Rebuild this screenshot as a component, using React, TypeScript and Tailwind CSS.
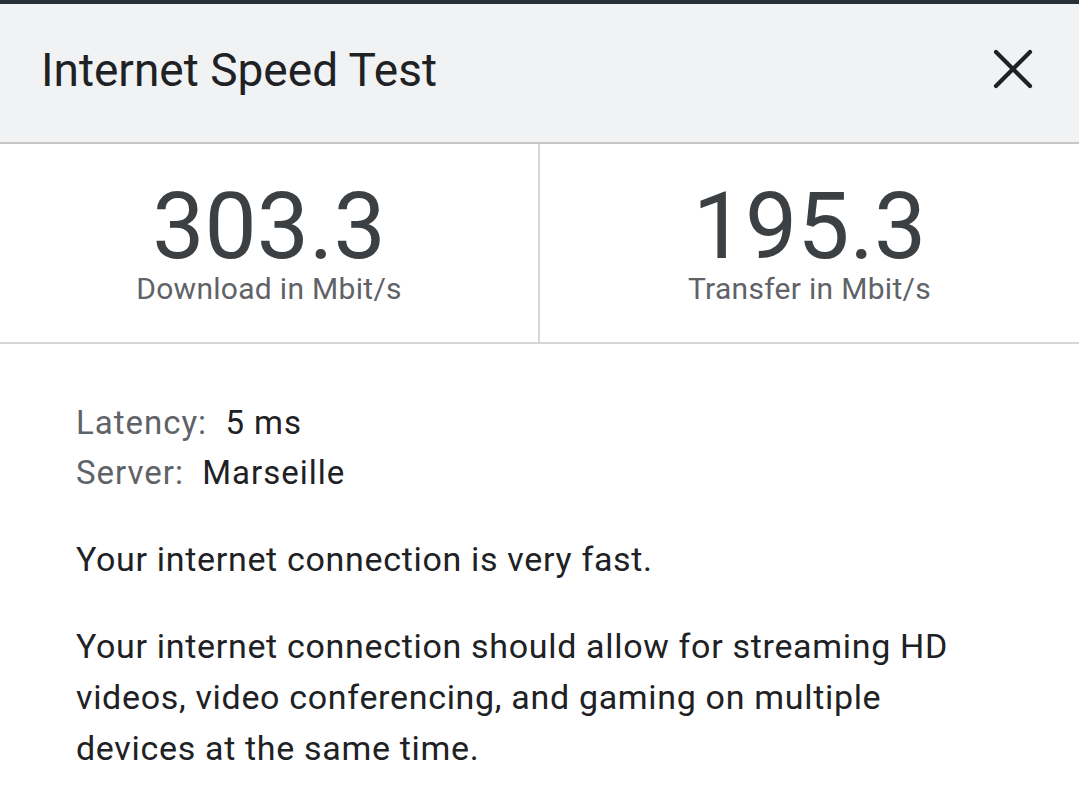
const stats = [
  { value: "303.3", label: "Download in Mbit/s" },
  { value: "195.3", label: "Transfer in Mbit/s" },
];

export default function App() {
  return (
    <div className="w-[1079px] h-[804px] overflow-hidden bg-white font-['Roboto',sans-serif]">
      {/* top strip */}
      <div className="h-[4px] bg-[#283036]" />

      {/* Header */}
      <div className="h-[140px] bg-[#f1f2f4] flex items-center justify-between pl-[41px] pr-[46px] border-b-2 border-[#c6c6c6]">
        <h1 className="text-[46px] text-[#202124] leading-none -mt-[6px]">Internet Speed Test</h1>
        <svg width="40" height="40" viewBox="0 0 40 40" className="-mt-[8px]">
          <path d="M3 3 L37 37 M37 3 L3 37" stroke="#202124" strokeWidth="4.2" strokeLinecap="round" fill="none" />
        </svg>
      </div>

      {/* Stats */}
      <div className="grid grid-cols-[540px_1fr] h-[200px] border-b-2 border-[#d6d6d6]">
        {stats.map((s, i) => (
          <div
            key={s.label}
            className={`flex flex-col items-center pt-[38px] ${i === 0 ? "border-r-2 border-[#d6d6d6]" : ""}`}
          >
            <span className="text-[93px] leading-[90px] text-[#3c4043]">{s.value}</span>
            <span className="text-[30px] leading-[34px] tracking-[0.01em] text-[#5f6368]">{s.label}</span>
          </div>
        ))}
      </div>

      {/* Details */}
      <div className="pl-[76px] pr-[80px] pt-[54px] text-[33px] leading-[50px] tracking-[0.03em] text-[#202124]">
        <div>
          <span className="text-[#5f6368]">Latency:</span>&nbsp; 5 ms
        </div>
        <div>
          <span className="text-[#5f6368]">Server:</span>&nbsp; Marseille
        </div>
        <p className="mt-[36px] text-[34px] leading-[51px] tracking-[0.02em]">Your internet connection is very fast.</p>
        <p className="mt-[36px] text-[34px] leading-[51px] tracking-[0.02em]">
          Your internet connection should allow for streaming HD videos, video conferencing, and gaming on multiple
          devices at the same time.
        </p>
      </div>
    </div>
  );
}
